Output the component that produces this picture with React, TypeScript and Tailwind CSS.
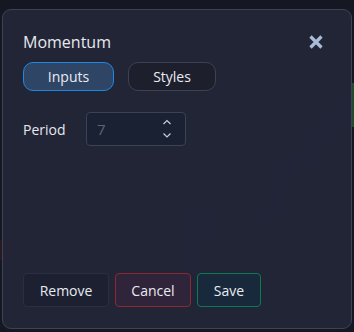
import React from "react";

function Chart() {
  return (
    <svg className="absolute inset-0" width="354" height="332" viewBox="0 0 354 332">
      <rect x="352" y="83" width="2" height="44" fill="#1f4d2a" />
      <g fill="#1e3a38" opacity="0.35">
        <rect x="182" y="210" width="14" height="90" />
        <rect x="200" y="200" width="14" height="40" />
        <rect x="253" y="205" width="14" height="20" />
        <rect x="270" y="160" width="14" height="55" />
        <rect x="287" y="150" width="14" height="40" />
        <rect x="305" y="130" width="14" height="35" />
        <rect x="322" y="110" width="14" height="35" />
        <rect x="338" y="85" width="14" height="40" />
      </g>
      <g fill="#4a1f26" opacity="0.35">
        <rect x="235" y="218" width="14" height="10" />
        <rect x="0" y="240" width="14" height="20" />
      </g>
    </svg>
  );
}

function Spinner() {
  return (
    <svg width="10" height="24" viewBox="0 0 10 24" fill="none" stroke="#c8ccd6" strokeWidth="1.2">
      <path d="M1.5 7 L5 3.5 L8.5 7" />
      <path d="M1.5 16.5 L5 20 L8.5 16.5" />
    </svg>
  );
}

export default function App() {
  const font = { fontFamily: '"Open Sans", "Noto Sans", sans-serif' };
  return (
    <div className="relative w-[354px] h-[332px] bg-[#151822] overflow-hidden" style={font}>
      <Chart />
      <div className="absolute left-[2px] top-[9px] w-[350px] h-[320px] rounded-[9px] border border-[#3d4254] bg-[#232638]/95 flex flex-col px-[20px] pt-[20px] pb-[21px]">
        <div className="flex items-center justify-between h-[24px]">
          <span className="text-[16px] text-[#e6e8ee] leading-[24px]">Momentum</span>
          <svg width="16" height="16" viewBox="0 0 16 16" className="mr-[7px]">
            <path d="M2.5 2.5 L13.5 13.5 M13.5 2.5 L2.5 13.5" stroke="#a9bbd6" strokeWidth="3.2" strokeLinecap="butt" />
          </svg>
        </div>
        <div className="flex gap-[14px] mt-[8px]">
          <button className="w-[91px] h-[29px] rounded-[10px] border border-[#1e88e5] bg-[#2f4566] text-[14px] text-[#e8ebf2]">
            Inputs
          </button>
          <button className="w-[88px] h-[29px] rounded-[10px] border border-[#3d4152] bg-[#1d1f2c] text-[14px] text-[#e8ebf2]">
            Styles
          </button>
        </div>
        <div className="flex items-center mt-[21px]">
          <span className="w-[63px] text-[14px] text-[#e6e8ee]">Period</span>
          <div className="w-[100px] h-[34px] rounded-[4px] border border-[#3b4256] bg-[#1a2133] flex items-center justify-between pl-[10px] pr-[13px]">
            <span className="text-[15px] text-[#5c6478]">7</span>
            <Spinner />
          </div>
        </div>
        <div className="flex-1" />
        <div className="flex gap-[6px]">
          <button className="w-[86px] h-[34px] rounded-[4px] border border-[#2b2f41] bg-[#1d2030] text-[14px] text-[#e8ebf2]">
            Remove
          </button>
          <button className="w-[76px] h-[34px] rounded-[4px] border border-[#8a2a30] bg-[#30243a] text-[14px] text-[#e8ebf2]">
            Cancel
          </button>
          <button className="w-[64px] h-[34px] rounded-[4px] border border-[#0c7a55] bg-[#17293a] text-[14px] text-[#e8ebf2]">
            Save
          </button>
        </div>
      </div>
    </div>
  );
}
